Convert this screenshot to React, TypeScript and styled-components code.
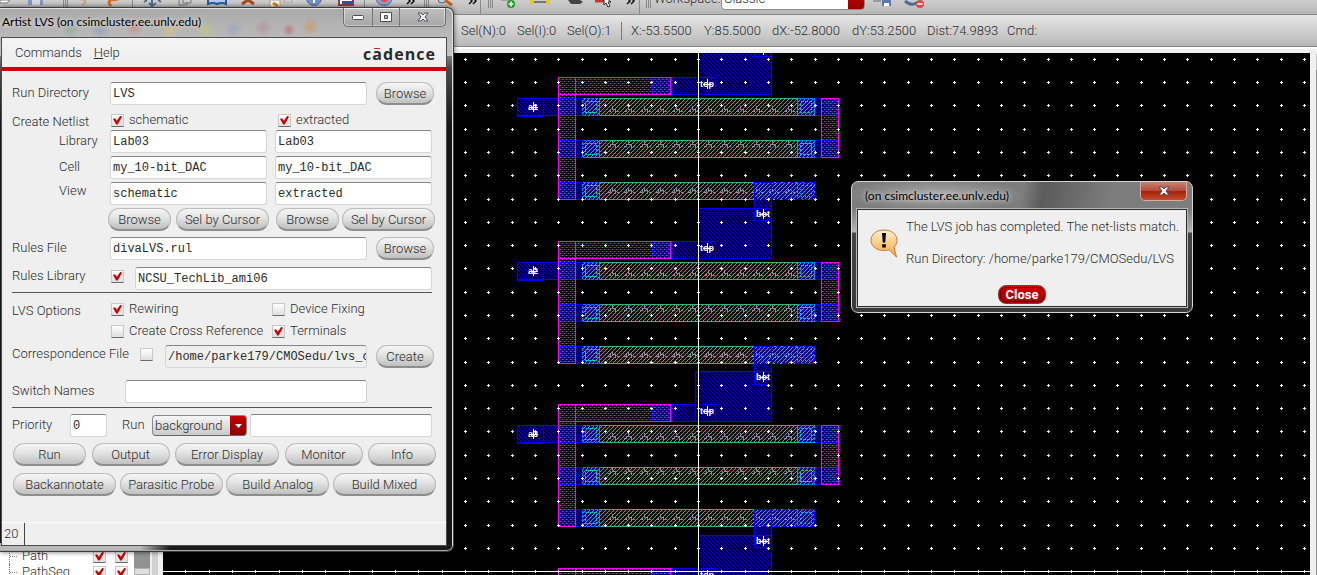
import React, { useId } from "react";
import styled, { createGlobalStyle, css } from "styled-components";

const GlobalStyle = createGlobalStyle`
  *, *::before, *::after { box-sizing: border-box; }
  html, body { margin: 0; height: 100%; }
  body { overflow: hidden; background: #f0f0f0; color: #2c2c2c; font: 300 13px/16px Roboto, "Liberation Sans", Arial, sans-serif; }
  #root { height: 100%; }
  button, input, select { font: inherit; color: inherit; margin: 0; }
`;

/* ---------- Main editor window ---------- */

const Desktop = styled.div`
  position: relative;
  display: flex;
  flex-direction: column;
  height: 100vh;
  overflow: hidden;
`;

const Toolbar = styled.div`
  display: flex;
  align-items: flex-end;
  flex: none;
  height: 15px;
  overflow: hidden;
  background: linear-gradient(#cdcdcd, #b6b6b6);
  border-bottom: 1px solid #868686;
`;

const ToolButton = styled.button<{ $w: number; $gap: number }>`
  flex: none;
  width: ${(p) => p.$w}px;
  height: 14px;
  margin-left: ${(p) => p.$gap}px;
  padding: 0;
  border: 0;
  background: none;
  svg { display: block; overflow: visible; }
`;

const ToolMark = styled.span<{ $w: number; $gap: number }>`
  flex: none;
  width: ${(p) => p.$w}px;
  height: 14px;
  margin-left: ${(p) => p.$gap}px;
  svg { display: block; overflow: visible; }
`;

const WorkspaceLabel = styled.label`
  flex: none;
  width: 67px;
  margin-left: 3px;
  height: 23px;
`;

const selectSkin = css`
  appearance: none;
  border: 1px solid #8a8a8a;
  border-radius: 4px;
  padding: 0 18px 0 2px;
`;

const WorkspaceSelect = styled.select`
  ${selectSkin}
  flex: none;
  width: 144px;
  height: 22px;
  margin-bottom: 4px;
  background: linear-gradient(#d40000, #960000) right / 16px 100% no-repeat #fff;
`;

const StatusBar = styled.div`
  display: flex;
  align-items: center;
  flex: none;
  height: 32px;
  padding-left: 461px;
  background: linear-gradient(#e6e6e6, #b8b8b8);
  border-bottom: 1px solid #868686;
`;

const Readout = styled.span<{ $w: number }>`
  flex: none;
  width: ${(p) => p.$w}px;
  white-space: nowrap;
`;

const StatusDivider = styled.span`
  flex: none;
  width: 1px;
  height: 18px;
  margin-right: 9px;
  background: #777;
`;

const Workbench = styled.div`
  display: flex;
  flex: 1;
  min-height: 0;
  border-top: 2px solid #fff;
  padding-top: 4px;
`;

const Sidebar = styled.div`
  display: flex;
  flex: none;
  width: 163px;
  overflow: hidden;
  background: #f0f0f0;
`;

const LayerTree = styled.ul`
  flex: none;
  width: 134px;
  margin: 0;
  padding: 495px 0 0;
  list-style: none;
  background: #fff;
`;

const LayerRow = styled.li`
  display: flex;
  align-items: center;
  height: 16px;
  padding-left: 9px;
`;

const TreeLine = styled.span`
  width: 9px;
  height: 16px;
  margin-right: 4px;
  border-left: 1px dotted #777;
  background: linear-gradient(90deg, #888 50%, transparent 50%) 0 8px / 2px 1px repeat-x;
`;

const LayerName = styled.span`
  width: 71px;
`;

const LayerToggles = styled.span`
  display: flex;
  gap: 9px;
`;

const SideScroll = styled.div`
  display: flex;
  flex-direction: column;
  flex: none;
  width: 16px;
  padding-top: 495px;
  background: #929292;
`;

const ScrollThumb = styled.div`
  height: 40px;
  margin-top: 20px;
  background: #ddd;
  border: 1px solid #b0b0b0;
`;

const Splitter = styled.div`
  width: 6px;
  margin-left: 2px;
  background: #cfcfd4;
`;

const Canvas = styled.div`
  flex: 1;
  min-width: 0;
  overflow: hidden;
  background: #000;
  svg { display: block; width: 100%; height: 100%; }
`;

const CanvasScroll = styled.div`
  flex: none;
  width: 7px;
  background: linear-gradient(#c4c4c4 16px, #8e8e8e 16px) right 1px / 1px 100% no-repeat #f0f0f0;
`;

/* ---------- Floating windows ---------- */

const closeGlyph = "#f4f4f4";

const LvsWindow = styled.section`
  position: absolute;
  left: 0;
  top: 7px;
  width: 454px;
  border: 1px solid #3c3c3c;
  border-left: 0;
  border-radius: 0 7px 7px 0;
  padding: 0 6px 5px 1px;
  box-shadow: inset -1px 1px 0 #e2e2e2, inset 0 -1px 0 #a8a8a8, 0 0 5px rgba(0, 0, 0, 0.6);
  background:
    radial-gradient(circle at 70px 22px, rgba(80, 150, 90, 0.25), transparent 9px),
    radial-gradient(circle at 100px 22px, rgba(80, 110, 190, 0.25), transparent 10px),
    radial-gradient(circle at 134px 20px, rgba(230, 90, 90, 0.35), transparent 9px),
    radial-gradient(circle at 170px 22px, rgba(240, 200, 80, 0.4), transparent 10px),
    radial-gradient(circle at 206px 22px, rgba(200, 210, 90, 0.4), transparent 10px),
    radial-gradient(circle at 234px 21px, rgba(120, 140, 210, 0.35), transparent 9px),
    radial-gradient(circle at 263px 20px, rgba(190, 110, 140, 0.4), transparent 9px),
    radial-gradient(circle at 289px 22px, rgba(200, 60, 70, 0.45), transparent 7px),
    radial-gradient(circle at 310px 19px, rgba(220, 140, 60, 0.5), transparent 9px),
    linear-gradient(#a9a9a9, #c4c4c4) 0 0 / 100% 48px no-repeat,
    linear-gradient(90deg, #b9b9b9 140px, #1c1c1c 170px) bottom / 100% 8px no-repeat,
    linear-gradient(#8c8c8c 45px, #4a4a4a 60px, #151515 120px, #151515);
`;

const TitleBar = styled.header`
  display: flex;
  align-items: flex-start;
  justify-content: space-between;
  height: 29px;
`;

const Title = styled.h1`
  margin: 0;
  padding: 5px 1px;
  font: 12px/17px Lato, "Open Sans", sans-serif;
  color: #000;
  white-space: nowrap;
  text-shadow: 0 0 5px #fff;
`;

const Controls = styled.div`
  display: flex;
  height: 19px;
  margin-right: 1px;
  border: 1px solid #6c6c6c;
  border-top: 0;
  border-radius: 0 0 5px 5px;
  box-shadow: inset 0 0 0 1px rgba(255, 255, 255, 0.5);
`;

const ControlButton = styled.button<{ $w: number }>`
  display: grid;
  place-items: center;
  width: ${(p) => p.$w}px;
  padding: 0;
  border: 0;
  background: linear-gradient(rgba(255, 255, 255, 0.25), rgba(80, 80, 80, 0.12));
  & + & { border-left: 1px solid #777; }
`;

const Client = styled.div`
  display: flex;
  flex-direction: column;
  border: 1px solid #4c4c4c;
  background: #efefef;
`;

const MenuBar = styled.nav`
  display: flex;
  align-items: center;
  gap: 12px;
  height: 33px;
  padding: 0 11px 0 13px;
  background: linear-gradient(#f4f4f4, #eeeeee);
  border-bottom: 4px solid #cc0000;
`;

const MenuItem = styled.button`
  padding: 0;
  border: 0;
  background: none;
`;

const Brand = styled.span`
  display: flex;
  justify-content: space-between;
  width: 72px;
  margin-left: auto;
  padding-top: 3px;
  font: bold 16px/24px "Open Sans", sans-serif;
  color: #2b2b2b;
`;

const Macron = styled.span`
  background: linear-gradient(#d8232a, #d8232a) center 6px / 6px 1px no-repeat;
`;

const Form = styled.form`
  display: flex;
  flex-direction: column;
  padding: 11px 12px 26px 10px;
`;

const Row = styled.div<{ $gap?: number; $h?: number }>`
  display: flex;
  align-items: center;
  flex: none;
  height: ${(p) => p.$h ?? 23}px;
  margin-bottom: ${(p) => p.$gap ?? 3}px;
`;

type Nudge = "up" | "down";

const Caption = styled.label<{ $w?: number; $indent?: boolean; $sit?: Nudge }>`
  flex: none;
  width: ${(p) => p.$w ?? 98}px;
  padding-left: ${(p) => (p.$indent ? 47 : 0)}px;
  padding-top: ${(p) => (p.$sit === "down" ? 3 : 0)}px;
  padding-bottom: ${(p) => (p.$sit === "up" ? 5 : p.$sit === "down" ? 0 : 2)}px;
  white-space: nowrap;
`;

const TextBox = styled.input<{ $w?: number; $muted?: boolean; $mr?: number }>`
  ${(p) => (p.$w ? `flex: none; width: ${p.$w}px;` : "flex: 1; width: 0;")}
  height: 23px;
  margin-right: ${(p) => p.$mr ?? 0}px;
  padding: 0 0 0 2px;
  border: 1px solid #d6d6d6;
  border-top: 1px solid #858585;
  border-radius: 3px;
  background: ${(p) => (p.$muted ? "#efefef" : "#fff")};
  font: 12px/20px "Liberation Mono", monospace;
  outline: 0;
`;

const PushButton = styled.button<{ $w: number; $ml?: number }>`
  flex: none;
  width: ${(p) => p.$w}px;
  height: 23px;
  margin-left: ${(p) => p.$ml ?? 0}px;
  padding: 2px 0 0;
  border: 1px solid #bcbcbc;
  border-bottom: 2px solid #8e8e8e;
  border-radius: 11px;
  background: linear-gradient(#f6f6f6, #e2e2e2 45%, #c0c0c0);
  white-space: nowrap;
`;

const Tick = styled.input.attrs({ type: "checkbox" })`
  appearance: none;
  position: relative;
  flex: none;
  width: 13px;
  height: 13px;
  border: 1px solid #c8c8c8;
  border-bottom: 1px solid #6a6a6a;
  border-radius: 1px;
  background: linear-gradient(#fff, #dedede);
  &:checked::after {
    content: "";
    position: absolute;
    inset: 1px;
    background: #cc0000;
    clip-path: polygon(0 40%, 22% 30%, 42% 58%, 82% 4%, 100% 14%, 52% 100%, 36% 100%);
  }
`;

const TickLabel = styled.label<{ $w?: number; $sit?: Nudge }>`
  display: flex;
  align-items: center;
  gap: 5px;
  flex: none;
  width: ${(p) => (p.$w ? `${p.$w}px` : "auto")};
  padding-left: 1px;
  padding-bottom: ${(p) => (p.$sit === "up" ? 5 : 0)}px;
  white-space: nowrap;
`;

const Rule = styled.hr`
  flex: none;
  width: 420px;
  height: 1px;
  margin: 0 0 6px;
  border: 0;
  background: #555;
`;

const ModePicker = styled.div`
  position: relative;
  flex: none;
  width: 95px;
  margin-right: 3px;
  svg { position: absolute; right: 5px; top: 9px; pointer-events: none; }
`;

const ModeSelect = styled.select`
  ${selectSkin}
  display: block;
  width: 100%;
  height: 21px;
  border-bottom-color: #666;
  background:
    linear-gradient(#c80000, #900000) right / 16px 100% no-repeat,
    linear-gradient(#f6f6f6, #c9c9c9);
`;

const ButtonRow = styled(Row)`
  width: 423px;
  margin-left: 1px;
  justify-content: space-between;
`;

const Footer = styled.footer`
  height: 23px;
  border-top: 1px solid #fff;
  display: flex;
`;

const PromptNumber = styled.span`
  width: 23px;
  padding: 3px 2px;
  border-right: 1px solid #444;
`;

const MessageWindow = styled.section`
  position: absolute;
  left: 851px;
  top: 181px;
  width: 342px;
  padding: 0 5px 5px;
  border: 1px solid #d4d4d4;
  border-radius: 7px;
  background:
    radial-gradient(ellipse 90px 16px at 85px 13px, rgba(200, 200, 200, 0.6), transparent),
    linear-gradient(100deg, transparent 50%, rgba(50, 50, 50, 0.45) 56%, transparent 76%) 0 0 / 100% 27px no-repeat,
    linear-gradient(#7d7d7d 27px, #b5b5b5 50px, #444 51px, #3a3a3a);
`;

const MessageTitleBar = styled.header`
  display: flex;
  justify-content: space-between;
  align-items: flex-start;
  height: 27px;
  padding-left: 7px;
`;

const RedClose = styled.button`
  display: grid;
  place-items: center;
  width: 47px;
  height: 19px;
  padding: 0;
  border: 1px solid #dba99f;
  border-top: 0;
  border-radius: 0 0 5px 5px;
  background: linear-gradient(#c98578, #b34937 50%, #a5210b 50%, #c44a2c);
`;

const MessageBody = styled.div`
  display: grid;
  grid-template-columns: 36px 1fr;
  height: 98px;
  padding: 9px 0 0 12px;
  border: 1px solid #2c2c2c;
  outline: 1px solid #b8b8b8;
  background: #efefef;
`;

const MessageText = styled.div`
  p { margin: 0 0 16px; white-space: nowrap; }
`;

const AlertIcon = styled.svg`
  margin-top: 10px;
`;

const CloseRow = styled.div`
  grid-column: 1 / -1;
  display: flex;
  justify-content: center;
  padding-right: 12px;
`;

const CloseButton = styled.button`
  width: 48px;
  height: 19px;
  padding: 0;
  border: 1px solid #a03030;
  border-radius: 8px;
  background: linear-gradient(#cf0000, #a00000);
  color: #fff;
  font-weight: bold;
  line-height: 15px;
  outline: 1px dotted #200;
  outline-offset: -3px;
`;

/* ---------- Toolbar drawings ---------- */

type Tool = { kind: string; gap: number; w: number; art: React.ReactNode };

const grip = <path d="M0.5 0V8M2.5 0V8M4.5 0V8" stroke="#888" />;
const chevrons = <path d="M1 -2L4 1L1 4M5 -2L8 1L5 4" fill="none" stroke="#111" strokeWidth="1.5" />;
const divider = <path d="M0.5 0V14" stroke="#8a8a8a" />;

const tools: Tool[] = [
  { kind: "open", gap: 0, w: 10, art: <path d="M0 0H10L7 3H0Z" fill="#fff" stroke="#777" /> },
  { kind: "Save", gap: 18, w: 16, art: <><path d="M0 0H15V5H0Z" fill="#8996bd" /><path d="M4 0H12V5H4Z" fill="#d4d9e6" /></> },
  { kind: "grip", gap: 19, w: 5, art: grip },
  { kind: "Undo", gap: 10, w: 11, art: <path d="M0 -1Q9 -1 7 3L4 5" fill="none" stroke="#c9a377" strokeWidth="2" /> },
  { kind: "Redo", gap: 18, w: 13, art: <path d="M11 -1L4 0Q0 2 4 6" fill="none" stroke="#dd6b17" strokeWidth="3" /> },
  { kind: "divider", gap: 12, w: 2, art: divider },
  { kind: "Move", gap: 10, w: 17, art: <path d="M8 0V5M3 0L0 2M14 0L17 2M5 3L8 6L12 3" fill="none" stroke="#49708f" strokeWidth="2" /> },
  { kind: "Copy", gap: 17, w: 15, art: <><path d="M5 -2H13V3H5Z" fill="#ccc" stroke="#777" /><path d="M1 0V5H9V2" fill="none" stroke="#777" /></> },
  { kind: "Stretch", gap: 14, w: 20, art: <path d="M1 0V4Q6 2 10 4Q15 2 19 4V0" fill="#adc9ef" stroke="#27589c" strokeWidth="2" /> },
  { kind: "Delete", gap: 14, w: 14, art: <path d="M1 4L7 0L13 4" fill="none" stroke="#a64712" strokeWidth="3" /> },
  { kind: "Repeat", gap: 15, w: 22, art: <><path d="M0 0H10V7H0ZM14 0H22V2H14Z" fill="#f5f5f5" stroke="#b0a090" /><path d="M3 3L8 6" stroke="#e17b18" strokeWidth="3" /></> },
  { kind: "Info", gap: 14, w: 17, art: <><circle cx="8" cy="-2" r="7.5" fill="#7390d4" stroke="#5a6687" /><path d="M8 -1V3" stroke="#fff" strokeWidth="2" /></> },
  { kind: "Properties", gap: 15, w: 16, art: <><path d="M1 0V5H15V0" fill="#fff" stroke="#a33848" strokeWidth="2" /><path d="M4 1H15V4H4Z" fill="#3c4f88" /></> },
  { kind: "divider", gap: 10, w: 2, art: divider },
  { kind: "Options", gap: 9, w: 18, art: <><circle cx="9" cy="-3" r="8.5" fill="#8ea0c7" stroke="#586996" /><path d="M6 -1Q9 3 13 -1" fill="none" stroke="#e44" strokeWidth="2" /></> },
  { kind: "More", gap: 13, w: 8, art: chevrons },
  { kind: "grip", gap: 10, w: 5, art: grip },
  { kind: "Zoom", gap: 9, w: 16, art: <><circle cx="4" cy="-1" r="4" fill="#c1cee0" stroke="#666" /><path d="M7 0L14 5" stroke="#c66317" strokeWidth="3" /></> },
  { kind: "More zoom", gap: 14, w: 8, art: chevrons },
  { kind: "divider", gap: 4, w: 2, art: divider },
  { kind: "grip", gap: 6, w: 5, art: grip },
  { kind: "Add", gap: 14, w: 10, art: <><path d="M-6 0H2" stroke="#777" /><circle cx="4" cy="4" r="4" fill="#1f9a26" /><path d="M4 1.5V6.5M1.5 4H6.5" stroke="#fff" strokeWidth="1.5" /></> },
  { kind: "Ruler", gap: 13, w: 20, art: <><path d="M1 2H19" stroke="#222" /><path d="M0 0H4V4H0ZM16 0H20V4H16Z" fill="#e6cb22" /></> },
  { kind: "Label", gap: 21, w: 12, art: <path d="M-3 0H9L12 2L9 4H0Z" fill="#444" /> },
  { kind: "Select", gap: 12, w: 18, art: <><path d="M0 1H10" stroke="#c33" strokeWidth="3" /><path d="M9 -4L16 2L13 2L15 6L13 7L11 3L9 5Z" fill="#fff" stroke="#222" /></> },
  { kind: "More select", gap: 13, w: 8, art: chevrons },
  { kind: "divider", gap: 5, w: 2, art: divider },
  { kind: "grip", gap: 5, w: 5, art: grip },
];

const workspaceTools: Tool[] = [
  { kind: "Save workspace", gap: 8, w: 19, art: <><path d="M0 1H8" stroke="#999" strokeWidth="2" /><path d="M9 -3H18V6H9Z" fill="#5d76b8" /><path d="M11 3H16V6H11Z" fill="#fff" /></> },
  { kind: "Delete workspace", gap: 13, w: 19, art: <><path d="M0 1Q7 7 13 2" fill="none" stroke="#4f6d97" strokeWidth="3" /><circle cx="15" cy="4" r="4" fill="#d94a4a" /><path d="M12.500 4H17.500" stroke="#fff" strokeWidth="1.500" /></> },
];

function ToolItem({ tool }: { tool: Tool }) {
  const art = <svg width={tool.w} height="14" aria-hidden="true">{tool.art}</svg>;
  if (tool.kind === "grip" || tool.kind === "divider" || tool.kind === "open") {
    return <ToolMark $w={tool.w} $gap={tool.gap}>{art}</ToolMark>;
  }
  return <ToolButton type="button" aria-label={tool.kind} $w={tool.w} $gap={tool.gap}>{art}</ToolButton>;
}

/* ---------- Layout drawing ---------- */

const BLUE = "#0000ff";
const PINK = "#ff00ff";
const GREEN = "#00cc66";
const GREY = "#8c8ca0";

function Metal({ x, y, w, h }: { x: number; y: number; w: number; h: number }) {
  return <rect x={x + 0.5} y={y + 0.5} width={w - 1} height={h - 1} fill="url(#metal)" stroke={BLUE} />;
}

function Poly({ x, y, w, h }: { x: number; y: number; w: number; h: number }) {
  return <rect x={x + 0.5} y={y + 0.5} width={w - 1} height={h - 1} fill="url(#poly)" stroke={PINK} />;
}

function Contact({ x, y }: { x: number; y: number }) {
  return (
    <g stroke="#00c8b0" strokeDasharray="3 1">
      <rect x={x + 0.5} y={y + 0.5} width="17" height="17" fill="url(#well)" stroke="#0090e0" />
      <rect x={x + 3.5} y={y + 3.5} width="11" height="11" fill="none" />
    </g>
  );
}

function Resistor({ y, squiggle }: { y: number; squiggle: number }) {
  const marks: string[] = [];
  for (let x = 608; x < 792; x += 16) {
    const top = y + squiggle;
    marks.push(`M${x} ${top + 5.5}h2M${x + 2.5} ${top + 3}v3M${x + 4.5} ${top}v4M${x + 5} ${top + 3.5}h3M${x + 7.5} ${top + 3}v4M${x + 9} ${top + 5.5}h2`);
  }
  return (
    <g fill="none">
      <rect x="599" y={y} width="199" height="18" fill="url(#well)" />
      <path d={marks.join("")} stroke={GREY} />
      <rect x="599.5" y={y + 0.5} width="198" height="17" stroke={GREY} />
      <path d={`M600 ${y + 0.5}H797M600 ${y + 17.5}H797`} stroke={GREEN} strokeDasharray="4 3" />
    </g>
  );
}

function Pin({ x, y, name }: { x: number; y: number; name: string }) {
  return (
    <g fill="#fff">
      <text x={x} y={y + 3} textAnchor="middle" fontFamily='"Liberation Sans", sans-serif' fontSize="9" fontWeight="bold">{name}</text>
      <path d={`M${x + 0.5} ${y - 5}V${y + 5}M${x - 4} ${y + 0.5}H${x + 5}`} stroke="#fff" />
    </g>
  );
}

/* The stipples stay fixed to the canvas, so each stage offsets its shapes by dy. */
function Stage({ dy, padX, pin }: { dy: number; padX: number; pin: string | null }) {
  const rows = [98 + dy, 140 + dy, 182 + dy];
  const [r1, r2, r3] = rows;
  return (
    <g>
      <Metal x={padX} y={44 + dy} w={772 - padX} h={51} />
      <Metal x={652} y={77 + dy} w={64} h={18} />
      {pin && <Metal x={517} y={r1} w={27} h={19} />}
      <Metal x={517} y={r1} w={83} h={18} />
      <Metal x={558} y={r2} w={42} h={18} />
      <Metal x={558} y={r3} w={42} h={18} />
      <Metal x={797} y={r1} w={42} h={18} />
      <Metal x={797} y={r2} w={42} h={18} />
      <Metal x={797} y={r3} w={18} h={18} />
      <Poly x={558} y={77 + dy} w={113} h={18} />
      <Poly x={558} y={77 + dy} w={18} h={123} />
      <Poly x={821} y={r1} w={18} h={60} />
      <Resistor y={r1} squiggle={8} />
      <Resistor y={r2} squiggle={1} />
      <Resistor y={r3} squiggle={5} />
      {rows.map((y) => <Contact key={`l${y}`} x={582} y={y} />)}
      {rows.map((y) => <Contact key={`r${y}`} x={797} y={y} />)}
      <rect x="754.5" y={r3 + 0.5} width="60" height="17" fill="url(#metal)" stroke={BLUE} strokeDasharray="5 2" />
      <Metal x={754} y={r3} w={18} h={39} />
      <Pin x={707} y={84 + dy} name="top" />
      {pin && <Pin x={533} y={107 + dy} name={pin} />}
    </g>
  );
}

function CircuitLayout() {
  const dots: string[] = [];
  for (let i = -24; i <= 27; i++) {
    for (let j = 0; j <= 22; j++) {
      const x = Math.round(698 + i * 23.3);
      const y = Math.floor(59.4 + j * 23.28);
      dots.push(`M${x - 1} ${y + 0.5}h3M${x + 0.5} ${y - 1}v3`);
    }
  }
  const stages: [number, number, string | null][] = [
    [0, 698, "a1"], [164, 698, "a2"], [327, 695, "a3"], [491, 698, null],
  ];
  return (
    <svg shapeRendering="crispEdges" role="img" aria-label="Resistor ladder layout">
      <defs>
        <pattern id="metal" width="4" height="4" patternUnits="userSpaceOnUse">
          {[0, 1, 2, 3].map((n) => <rect key={n} x={n} y={n} width="1" height="1" fill="#0000f0" />)}
        </pattern>
        <pattern id="well" width="4" height="4" patternUnits="userSpaceOnUse">
          {[0, 1, 2, 3].map((n) => <rect key={n} x={n} y={3 - n} width="1" height="1" fill={GREEN} />)}
        </pattern>
        <pattern id="poly" width="4" height="4" patternUnits="userSpaceOnUse">
          <path d="M0 1h1v1h-1zM2 3h1v1h-1z" fill={PINK} />
        </pattern>
      </defs>
      <g transform="translate(-163 -53)">
        {stages.map(([dy, padX, pin]) => <Stage key={dy} dy={dy} padX={padX} pin={pin} />)}
        <Metal x={754} y={30} w={18} h={27} />
        <path d="M698.5 53V575M163 571.5H1310" stroke="#fff" />
        <path d={dots.join("")} stroke="#fff" />
        {[50, 214, 377, 541].map((y) => <Pin key={y} x={763} y={y} name="bot" />)}
      </g>
    </svg>
  );
}

/* ---------- Composite controls ---------- */

function Check({ text, on, w }: { text: string; on?: boolean; w?: number }) {
  return <TickLabel $w={w}><Tick defaultChecked={on} />{text}</TickLabel>;
}

function PairRow({ label, a, b, sit }: { label: string; a: string; b: string; sit?: Nudge }) {
  const id = useId();
  return (
    <Row>
      <Caption htmlFor={id} $indent $sit={sit}>{label}</Caption>
      <TextBox id={id} defaultValue={a} $w={157} $mr={8} />
      <TextBox aria-label={`${label} (extracted)`} defaultValue={b} $w={157} />
    </Row>
  );
}

function CloseMark() {
  return (
    <svg width="12" height="10" viewBox="0 0 12 10" aria-hidden="true">
      <path d="M1 1H4L6 3L8 1H11L8 5L11 9H8L6 7L4 9H1L4 5Z" fill={closeGlyph} stroke="#4e4e58" />
    </svg>
  );
}

export default function App() {
  return (
    <>
      <GlobalStyle />
      <Desktop>
        <Toolbar>
          {tools.map((t, i) => <ToolItem key={i} tool={t} />)}
          <WorkspaceLabel htmlFor="workspace">Workspace:</WorkspaceLabel>
          <WorkspaceSelect id="workspace"><option>Classic</option></WorkspaceSelect>
          {workspaceTools.map((t) => <ToolItem key={t.kind} tool={t} />)}
        </Toolbar>
        <StatusBar>
          <Readout $w={56}>Sel(N):0</Readout>
          <Readout $w={50}>Sel(I):0</Readout>
          <Readout $w={54}>Sel(O):1</Readout>
          <StatusDivider />
          <Readout $w={73}>X:-53.5500</Readout>
          <Readout $w={68}>Y:85.5000</Readout>
          <Readout $w={80}>dX:-52.8000</Readout>
          <Readout $w={75}>dY:53.2500</Readout>
          <Readout $w={80}>Dist:74.9893</Readout>
          <Readout $w={40}>Cmd:</Readout>
        </StatusBar>
        <Workbench>
          <Sidebar>
            <LayerTree>
              {["Path", "PathSeg"].map((name) => (
                <LayerRow key={name}>
                  <TreeLine />
                  <LayerName>{name}</LayerName>
                  <LayerToggles>
                    <Tick defaultChecked aria-label={`${name} visible`} />
                    <Tick defaultChecked aria-label={`${name} selectable`} />
                  </LayerToggles>
                </LayerRow>
              ))}
            </LayerTree>
            <SideScroll><ScrollThumb /></SideScroll>
            <Splitter />
          </Sidebar>
          <Canvas><CircuitLayout /></Canvas>
          <CanvasScroll />
        </Workbench>

        <LvsWindow aria-label="Artist LVS">
          <TitleBar>
            <Title>Artist LVS (on csimcluster.ee.unlv.edu)</Title>
            <Controls>
              <ControlButton type="button" aria-label="Minimize" $w={28}>
                <svg width="12" height="5"><rect x="0.5" y="0.5" width="11" height="4" rx="1" fill="#fff" stroke="#4e4e58" /></svg>
              </ControlButton>
              <ControlButton type="button" aria-label="Maximize" $w={27}>
                <svg width="12" height="10"><path d="M0.5 0.5H11.5V9.5H0.5ZM4.500 3.500V6.500H7.500V3.500Z" fill="#fff" fillRule="evenodd" stroke="#4e4e58" /></svg>
              </ControlButton>
              <ControlButton type="button" aria-label="Close window" $w={46}><CloseMark /></ControlButton>
            </Controls>
          </TitleBar>
          <Client>
            <MenuBar>
              <MenuItem type="button">Commands</MenuItem>
              <MenuItem type="button"><u>H</u>elp</MenuItem>
              <Brand><span>c</span><Macron>a</Macron><span>d</span><span>e</span><span>n</span><span>c</span><span>e</span></Brand>
            </MenuBar>
            <Form onSubmit={(e) => e.preventDefault()}>
              <Row $gap={6}>
                <Caption htmlFor="runDir">Run Directory</Caption>
                <TextBox id="runDir" defaultValue="LVS" />
                <PushButton type="button" $w={58} $ml={9}>Browse</PushButton>
              </Row>
              <Row $h={18} $gap={1}>
                <Caption as="span" $sit="down">Create Netlist</Caption>
                <Check text="schematic" on w={167} />
                <Check text="extracted" on />
              </Row>
              <PairRow label="Library" a="Lab03" b="Lab03" />
              <PairRow label="Cell" a="my_10-bit_DAC" b="my_10-bit_DAC" />
              <PairRow label="View" a="schematic" b="extracted" sit="up" />
              <Row $gap={6}>
                <PushButton type="button" $w={63} $ml={96}>Browse</PushButton>
                <PushButton type="button" $w={93} $ml={5}>Sel by Cursor</PushButton>
                <PushButton type="button" $w={63} $ml={7}>Browse</PushButton>
                <PushButton type="button" $w={93} $ml={3}>Sel by Cursor</PushButton>
              </Row>
              <Row $gap={7}>
                <Caption htmlFor="rulesFile">Rules File</Caption>
                <TextBox id="rulesFile" defaultValue="divaLVS.rul" />
                <PushButton type="button" $w={58} $ml={9}>Browse</PushButton>
              </Row>
              <Row $gap={2}>
                <Caption htmlFor="rulesLib" $sit="up">Rules Library</Caption>
                <TickLabel $w={25} $sit="up"><Tick defaultChecked aria-label="Use rules library" /></TickLabel>
                <TextBox id="rulesLib" defaultValue="NCSU_TechLib_ami06" $mr={2} />
              </Row>
              <Rule />
              <Row $h={20} $gap={2}>
                <Caption as="span" $sit="down">LVS Options</Caption>
                <Check text="Rewiring" on w={161} />
                <Check text="Device Fixing" />
              </Row>
              <Row $h={20} $gap={4}>
                <Caption as="span" />
                <Check text="Create Cross Reference" w={161} />
                <Check text="Terminals" on />
              </Row>
              <Row $gap={12}>
                <Caption htmlFor="corrFile" $w={127} $sit="up">Correspondence File</Caption>
                <TickLabel $w={26} $sit="up"><Tick aria-label="Use correspondence file" /></TickLabel>
                <TextBox id="corrFile" defaultValue="/home/parke179/CMOSedu/lvs_c" $muted />
                <PushButton type="button" $w={58} $ml={9}>Create</PushButton>
              </Row>
              <Row $gap={4}>
                <Caption htmlFor="switchNames" $w={113}>Switch Names</Caption>
                <TextBox id="switchNames" $w={242} />
              </Row>
              <Rule />
              <Row $gap={6}>
                <Caption htmlFor="priority" $w={58}>Priority</Caption>
                <TextBox id="priority" defaultValue="0" $w={37} $mr={15} />
                <Caption htmlFor="runMode" $w={30}>Run</Caption>
                <ModePicker>
                  <ModeSelect id="runMode"><option>background</option></ModeSelect>
                  <svg width="7" height="4"><path d="M0 0H7L3.500 4Z" fill="#fff" /></svg>
                </ModePicker>
                <TextBox aria-label="Run host" $mr={2} />
              </Row>
              <ButtonRow $gap={7}>
                <PushButton type="button" $w={73}>Run</PushButton>
                <PushButton type="button" $w={78}>Output</PushButton>
                <PushButton type="button" $w={104}>Error Display</PushButton>
                <PushButton type="button" $w={78}>Monitor</PushButton>
                <PushButton type="button" $w={68}>Info</PushButton>
              </ButtonRow>
              <ButtonRow $gap={0}>
                <PushButton type="button" $w={103}>Backannotate</PushButton>
                <PushButton type="button" $w={103}>Parasitic Probe</PushButton>
                <PushButton type="button" $w={103}>Build Analog</PushButton>
                <PushButton type="button" $w={103}>Build Mixed</PushButton>
              </ButtonRow>
            </Form>
            <Footer><PromptNumber>20</PromptNumber></Footer>
          </Client>
        </LvsWindow>

        <MessageWindow aria-label="LVS result">
          <MessageTitleBar>
            <Title as="h2">(on csimcluster.ee.unlv.edu)</Title>
            <RedClose type="button" aria-label="Close message"><CloseMark /></RedClose>
          </MessageTitleBar>
          <MessageBody>
            <AlertIcon width="28" height="30" viewBox="0 0 28 30" aria-hidden="true">
              <defs>
                <linearGradient id="bubble" x1="0" y1="0" x2="0" y2="1">
                  <stop offset="0" stopColor="#fff0cf" />
                  <stop offset="1" stopColor="#f3a63c" />
                </linearGradient>
              </defs>
              <path d="M14 1C6 1 1 5.500 1 11.500C1 17.500 7 21.500 14 21.500C16 21.500 17.500 21.300 19 20.800L26.500 28L24 18C26 16.500 27 14 27 11.500C27 5.500 22 1 14 1Z" fill="url(#bubble)" stroke="#cf7640" />
              <path d="M12 4H16L15.200 13.500H12.800ZM12.200 15.200H15.800V18.500H12.200Z" fill="#000" />
            </AlertIcon>
            <MessageText>
              <p>The LVS job has completed. The net-lists match.</p>
              <p>Run Directory: /home/parke179/CMOSedu/LVS</p>
            </MessageText>
            <CloseRow><CloseButton type="button">Close</CloseButton></CloseRow>
          </MessageBody>
        </MessageWindow>
      </Desktop>
    </>
  );
}
